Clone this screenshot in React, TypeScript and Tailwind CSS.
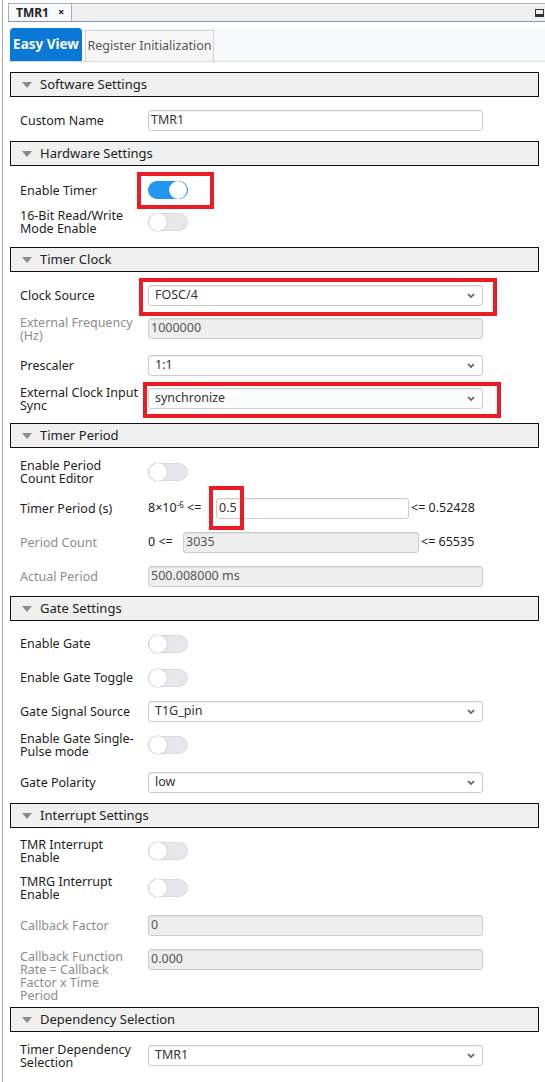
import React from "react";

const Header = ({ title }: { title: string }) => (
  <div className="ml-[2px] w-[529px] h-[25px] border border-[#111] bg-[#f0f0f0] flex items-center">
    <svg className="ml-[11px]" width="10" height="6" viewBox="0 0 10 6">
      <path d="M0 0h10L5 6z" fill="#8a8a8a" />
    </svg>
    <span className="ml-[8px] text-[13px] text-[#222]">{title}</span>
  </div>
);

const Row = ({
  label,
  disabled,
  className,
  children,
}: {
  label: React.ReactNode;
  disabled?: boolean;
  className: string;
  children?: React.ReactNode;
}) => (
  <div className={`flex pl-[12px] ${className}`}>
    <div
      className={`w-[128px] shrink-0 text-[12.5px] leading-[13px] ${
        disabled ? "text-[#8c8c8c]" : "text-[#1e1e1e]"
      }`}
    >
      {label}
    </div>
    {children}
  </div>
);

const Toggle = ({ on }: { on?: boolean }) => (
  <div
    className={`w-[40px] h-[18px] rounded-full border flex ${
      on ? "bg-[#2196f3] border-[#2196f3] justify-end" : "bg-[#e6e8eb] border-[#dadcdf] justify-start"
    }`}
  >
    <div className="w-[18px] h-[18px] -mt-px rounded-full bg-white shadow-[0_0_2px_rgba(0,0,0,0.25)]" />
  </div>
);

const Chevron = () => (
  <svg width="8" height="5" viewBox="0 0 8 5">
    <path d="M1 1l3 3 3-3" stroke="#5a5a5a" strokeWidth="1.7" fill="none" />
  </svg>
);

const Select = ({ value }: { value: string }) => (
  <div className="w-[335px] h-[21px] border border-[#cccccc] rounded-[3px] bg-white flex items-center justify-between pl-[6px] pr-[7px] text-[12.5px] text-[#333] shadow-[inset_0_1px_1px_rgba(0,0,0,0.07)]">
    <span>{value}</span>
    <Chevron />
  </div>
);

const Input = ({ value, disabled, w = "w-[335px]" }: { value: string; disabled?: boolean; w?: string }) => (
  <div
    className={`${w} h-[21px] border border-[#cccccc] rounded-[3px] flex items-center pl-[2px] text-[12.5px] shadow-[inset_0_1px_1px_rgba(0,0,0,0.07)] ${
      disabled ? "bg-[#eeeeee] text-[#555]" : "bg-white text-[#333]"
    }`}
  >
    {value}
  </div>
);

const RedBox = ({ className }: { className: string }) => (
  <div className={`absolute border-[4px] border-[#ed1c24] ${className}`} />
);

export default function App() {
  return (
    <div className="relative w-[545px] h-[1082px] bg-white overflow-hidden flex font-['Noto_Sans',sans-serif]">
      <div className="w-[8px] shrink-0">
        <div className="ml-[2px] w-[1px] h-full bg-[#a8a8a8]" />
      </div>

      <div className="flex-1 flex flex-col">
        {/* editor tab strip */}
        <div className="mt-[3px] h-[19px] border-t border-[#a9b0b8] border-b border-b-[#7f9db9] bg-[#f0f0f0] flex items-end justify-between">
          <div className="h-[18px] px-[7px] bg-[#f7f9fb] border border-b-0 border-[#a9b0b8] flex items-center gap-[9px] text-[12px] font-bold text-[#222]">
            <span>TMR1</span>
            <span className="text-[11px]">×</span>
          </div>
          <div className="mb-[4px] mr-[1px] w-[9px] h-[8px] border border-[#333] flex items-end">
            <div className="w-full h-[2px] bg-[#333]" />
          </div>
        </div>

        {/* view tabs */}
        <div className="mt-[6px] h-[34px] bg-[#f7f8fa] border-b border-[#dcdcdc] flex items-end gap-[3px] pl-[2px]">
          <div className="w-[72px] h-[33px] bg-[#0a78d7] rounded-t-[4px] flex items-center justify-center text-[13.5px] font-bold text-white whitespace-nowrap">
            Easy View
          </div>
          <div className="w-[129px] h-[31px] bg-[#f6f6f6] border border-b-0 border-[#d4d4d4] flex items-center justify-center text-[12.5px] text-[#555] whitespace-nowrap">
            Register Initialization
          </div>
        </div>

        <div className="mt-[10px]">
          <Header title="Software Settings" />
          <div className="pt-[7px] pb-[4px]">
            <Row label="Custom Name" className="h-[33px] items-center">
              <Input value="TMR1" />
            </Row>
          </div>

          <Header title="Hardware Settings" />
          <div className="pt-[8px] pb-[9px]">
            <Row label="Enable Timer" className="h-[32px] items-center">
              <Toggle on />
            </Row>
            <Row label={<>16-Bit Read/Write<br />Mode Enable</>} className="h-[32px] items-center">
              <Toggle />
            </Row>
          </div>

          <Header title="Timer Clock" />
          <div className="pt-[7px] pb-[8px]">
            <Row label="Clock Source" className="h-[33px] items-center">
              <Select value="FOSC/4" />
            </Row>
            <Row label={<>External Frequency<br />(Hz)</>} disabled className="h-[33px] items-center">
              <Input value="1000000" disabled />
            </Row>
            <Row label="Prescaler" className="h-[33px] mt-[4px] items-center">
              <Select value="1:1" />
            </Row>
            <Row label={<>External Clock Input<br />Sync</>} className="h-[33px] items-center">
              <Select value="synchronize" />
            </Row>
          </div>

          <Header title="Timer Period" />
          <div className="pt-[7px] pb-[3px]">
            <Row label={<>Enable Period<br />Count Editor</>} className="h-[33px] items-center">
              <Toggle />
            </Row>
            <Row label="Timer Period (s)" className="h-[33px] mt-[4px] items-center">
              <div className="flex items-center text-[12.5px] text-[#222]">
                <span className="w-[68px]">
                  8×10<sup className="text-[8px]">-6</sup> &lt;=
                </span>
                <Input value="0.5" w="w-[193px]" />
                <span className="ml-[2px]">&lt;= 0.52428</span>
              </div>
            </Row>
            <Row label="Period Count" disabled className="h-[33px] mt-[1px] items-center">
              <div className="flex items-center text-[12.5px] text-[#222]">
                <span className="w-[35px]">0 &lt;=</span>
                <Input value="3035" w="w-[236px]" disabled />
                <span className="ml-[2px]">&lt;= 65535</span>
              </div>
            </Row>
            <Row label="Actual Period" disabled className="h-[33px] mt-[1px] items-center">
              <Input value="500.008000 ms" disabled />
            </Row>
          </div>

          <Header title="Gate Settings" />
          <div className="pt-[6px] pb-[4px]">
            <Row label="Enable Gate" className="h-[33px] items-center">
              <Toggle />
            </Row>
            <Row label="Enable Gate Toggle" className="h-[33px] mt-[1px] items-center">
              <Toggle />
            </Row>
            <Row label="Gate Signal Source" className="h-[33px] mt-[1px] items-center">
              <Select value="T1G_pin" />
            </Row>
            <Row label={<>Enable Gate Single-<br />Pulse mode</>} className="h-[33px] items-center">
              <Toggle />
            </Row>
            <Row label="Gate Polarity" className="h-[33px] mt-[5px] items-center">
              <Select value="low" />
            </Row>
          </div>

          <Header title="Interrupt Settings" />
          <div className="pt-[6px]">
            <Row label={<>TMR Interrupt<br />Enable</>} className="h-[33px] items-center">
              <Toggle />
            </Row>
            <Row label={<>TMRG Interrupt<br />Enable</>} className="h-[33px] mt-[4px] items-center">
              <Toggle />
            </Row>
            <Row label="Callback Factor" disabled className="h-[33px] mt-[5px] items-center">
              <Input value="0" disabled />
            </Row>
            <Row
              label={
                <div className="pt-[1px]">
                  Callback Function
                  <br />
                  Rate = Callback
                  <br />
                  Factor x Time
                  <br />
                  Period
                </div>
              }
              disabled
              className="h-[58px] mt-[7px] items-start"
            >
              <Input value="0.000" disabled />
            </Row>
          </div>

          <Header title="Dependency Selection" />
          <div className="pt-[7px]">
            <Row label={<>Timer Dependency<br />Selection</>} className="h-[33px] items-center">
              <Select value="TMR1" />
            </Row>
          </div>
        </div>
      </div>

      <RedBox className="left-[137px] top-[172px] w-[77px] h-[37px]" />
      <RedBox className="left-[139px] top-[278px] w-[358px] h-[38px]" />
      <RedBox className="left-[143px] top-[382px] w-[358px] h-[36px]" />
      <RedBox className="left-[209px] top-[486px] w-[35px] h-[44px]" />
    </div>
  );
}
